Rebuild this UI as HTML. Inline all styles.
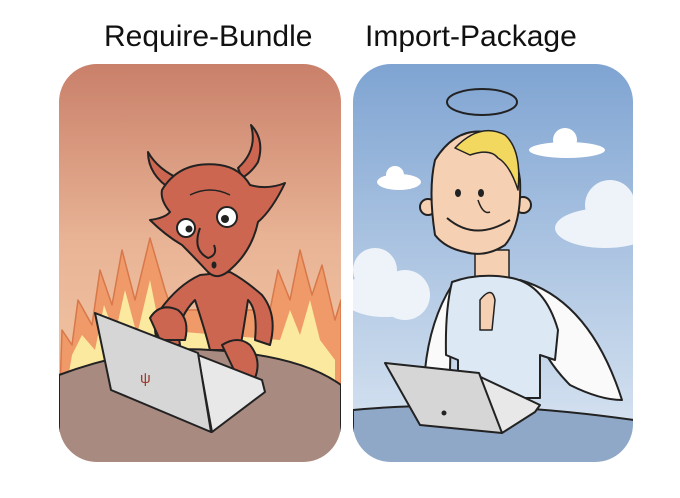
<!DOCTYPE html>
<html><head><style>
html,body{margin:0;padding:0;background:#fff;width:680px;height:498px;overflow:hidden;position:relative}
svg{display:block;position:absolute;left:0;top:0}
.t{position:absolute;top:20px;font:30px "Liberation Sans",sans-serif;color:#111;white-space:nowrap}
</style></head><body>
<svg width="680" height="498">
<defs>
<linearGradient id="hell" x1="0" y1="0" x2="0" y2="1">
<stop offset="0" stop-color="#c9806a"/><stop offset="0.45" stop-color="#e9b496"/><stop offset="1" stop-color="#f4cda8"/></linearGradient>
<linearGradient id="sky" x1="0" y1="0" x2="0" y2="1">
<stop offset="0" stop-color="#7fa4d2"/><stop offset="0.6" stop-color="#b8cde6"/><stop offset="1" stop-color="#dce7f3"/></linearGradient>
<clipPath id="c1"><rect x="59" y="64" width="282" height="398" rx="38"/></clipPath>
<clipPath id="c2"><rect x="353" y="64" width="280" height="398" rx="38"/></clipPath>
</defs>
<g clip-path="url(#c1)" stroke-linejoin="round">
<rect x="59" y="64" width="282" height="398" fill="url(#hell)"/>
<path d="M60 390 L62 330 L72 345 L78 300 L92 325 L100 270 L112 305 L122 250 L135 300 L150 238 L165 290 L172 310 L270 310 L278 270 L290 300 L300 250 L312 295 L322 265 L335 320 L341 300 L341 400Z" fill="#ef9a68" stroke="#d8784a" stroke-width="1.5"/>
<path d="M66 390 L72 355 L82 335 L95 350 L104 305 L115 335 L125 290 L137 335 L150 280 L160 330 L280 340 L290 310 L300 335 L310 300 L320 340 L335 360 L335 395Z" fill="#fbe9a0"/>
<path d="M59 375 Q140 345 210 350 Q300 355 341 385 L341 470 L59 470Z" fill="#a88a80" stroke="#222" stroke-width="2"/>
<!-- horns -->
<path d="M172 190 Q148 175 148 152 Q158 170 182 180Z" fill="#cc6650" stroke="#222" stroke-width="2"/>
<path d="M238 168 Q258 150 251 125 Q265 140 258 162 Q252 172 242 178Z" fill="#cc6650" stroke="#222" stroke-width="2"/>
<!-- body -->
<path d="M200 275 Q178 285 160 310 Q150 330 160 345 L180 345 Q175 320 195 300 Q205 330 210 350 L240 350 Q245 320 248 300 Q258 310 255 340 L270 345 Q278 315 262 295 Q245 280 230 272Z" fill="#cc6650" stroke="#222" stroke-width="2"/>
<!-- head -->
<path d="M162 190 Q180 160 220 165 Q240 168 250 185 Q268 190 285 183 Q272 210 258 222 Q252 250 232 268 Q218 282 208 272 Q195 258 182 245 Q165 235 150 220 Q165 218 170 212 Q160 200 162 190Z" fill="#cc6650" stroke="#222" stroke-width="2"/>
<circle cx="186" cy="228" r="9" fill="#fff" stroke="#222" stroke-width="2"/><circle cx="189" cy="229" r="3.5" fill="#222"/>
<circle cx="227" cy="217" r="10" fill="#fff" stroke="#222" stroke-width="2"/><circle cx="225" cy="219" r="4" fill="#222"/>
<path d="M200 228 Q192 250 208 258 Q218 255 214 245" fill="none" stroke="#222" stroke-width="2"/>
<ellipse cx="214" cy="265" rx="2.5" ry="3.5" fill="#222"/>
<path d="M190 195 Q210 185 230 195" fill="none" stroke="#222" stroke-width="1.5"/>
<!-- hands -->
<path d="M150 318 Q160 302 178 310 Q190 320 185 340 L160 340Z" fill="#cc6650" stroke="#222" stroke-width="2"/>
<path d="M222 345 Q238 335 250 345 Q262 360 255 378 L235 372Z" fill="#cc6650" stroke="#222" stroke-width="2"/>
<!-- laptop -->
<path d="M198 355 L262 380 L265 392 L212 432Z" fill="#e8e8e8" stroke="#222" stroke-width="2"/>
<path d="M95 313 L198 353 L211 432 L111 390Z" fill="#d6d6d6" stroke="#222" stroke-width="2"/>
<text x="140" y="383" font-family="Liberation Sans,sans-serif" font-size="15" fill="#9a3a2a">ψ</text>
</g>
<g clip-path="url(#c2)" stroke-linejoin="round">
<rect x="353" y="64" width="280" height="398" fill="url(#sky)"/>
<ellipse cx="399" cy="182" rx="22" ry="8" fill="#fff"/><circle cx="395" cy="175" r="9" fill="#fff"/>
<ellipse cx="567" cy="150" rx="38" ry="8" fill="#fff"/><circle cx="565" cy="140" r="12" fill="#fff"/>
<ellipse cx="605" cy="228" rx="50" ry="20" fill="#eef3fa"/><circle cx="610" cy="205" r="25" fill="#eef3fa"/>
<ellipse cx="385" cy="295" rx="45" ry="22" fill="#eef3fa"/><circle cx="375" cy="270" r="22" fill="#eef3fa"/><circle cx="405" cy="295" r="25" fill="#eef3fa"/>
<ellipse cx="482" cy="102" rx="35" ry="13" fill="none" stroke="#222" stroke-width="2"/>
<path d="M520 280 Q590 300 622 400 Q600 400 570 385 Q545 360 535 330Z" fill="#fafafa" stroke="#222" stroke-width="2"/>
<path d="M452 285 Q430 320 425 370 L450 370Z" fill="#fafafa" stroke="#222" stroke-width="2"/>
<path d="M475 250 L475 280 L509 280 L509 250Z" fill="#f6d0b2" stroke="#222" stroke-width="1.5"/>
<path d="M452 282 Q480 272 512 278 Q545 285 558 330 L555 360 L540 355 L540 398 L458 398 L458 360 L446 355 Q445 310 452 282Z" fill="#dce8f4" stroke="#222" stroke-width="2"/>
<path d="M480 300 Q492 285 495 300 L492 330 L480 330Z" fill="#f6d0b2" stroke="#222" stroke-width="1.5"/>
<circle cx="428" cy="207" r="8" fill="#f6d0b2" stroke="#222" stroke-width="2"/>
<circle cx="523" cy="205" r="8" fill="#f6d0b2" stroke="#222" stroke-width="2"/>
<path d="M435 235 Q428 190 435 160 Q455 128 485 132 Q515 140 520 180 Q522 225 505 245 Q485 258 465 252 Q445 248 435 235Z" fill="#f6d0b2" stroke="#222" stroke-width="2"/>
<path d="M455 148 Q480 122 505 135 Q522 150 518 190 Q510 165 498 158 Q490 148 470 155Z" fill="#f3d860" stroke="#222" stroke-width="1.5"/>
<path d="M447 218 Q475 242 510 220" fill="none" stroke="#222" stroke-width="2"/>
<path d="M478 200 Q483 215 490 212" fill="none" stroke="#222" stroke-width="1.5"/>
<ellipse cx="458" cy="193" rx="3" ry="4" fill="#222"/><ellipse cx="481" cy="193" rx="3" ry="4" fill="#222"/>
<path d="M353 410 Q480 398 634 420 L634 470 L353 470Z" fill="#8fa8c8" stroke="#222" stroke-width="2"/>
<path d="M470 372 L540 405 L535 412 L502 433Z" fill="#e8e8e8" stroke="#222" stroke-width="2"/>
<path d="M385 363 L479 373 L502 433 L420 425Z" fill="#d6d6d6" stroke="#222" stroke-width="2"/>
<circle cx="444" cy="413" r="2.5" fill="#222"/>
</g>
</svg>
<div class="t" style="left:104px">Require-Bundle</div>
<div class="t" style="left:365px">Import-Package</div>
</body></html>
